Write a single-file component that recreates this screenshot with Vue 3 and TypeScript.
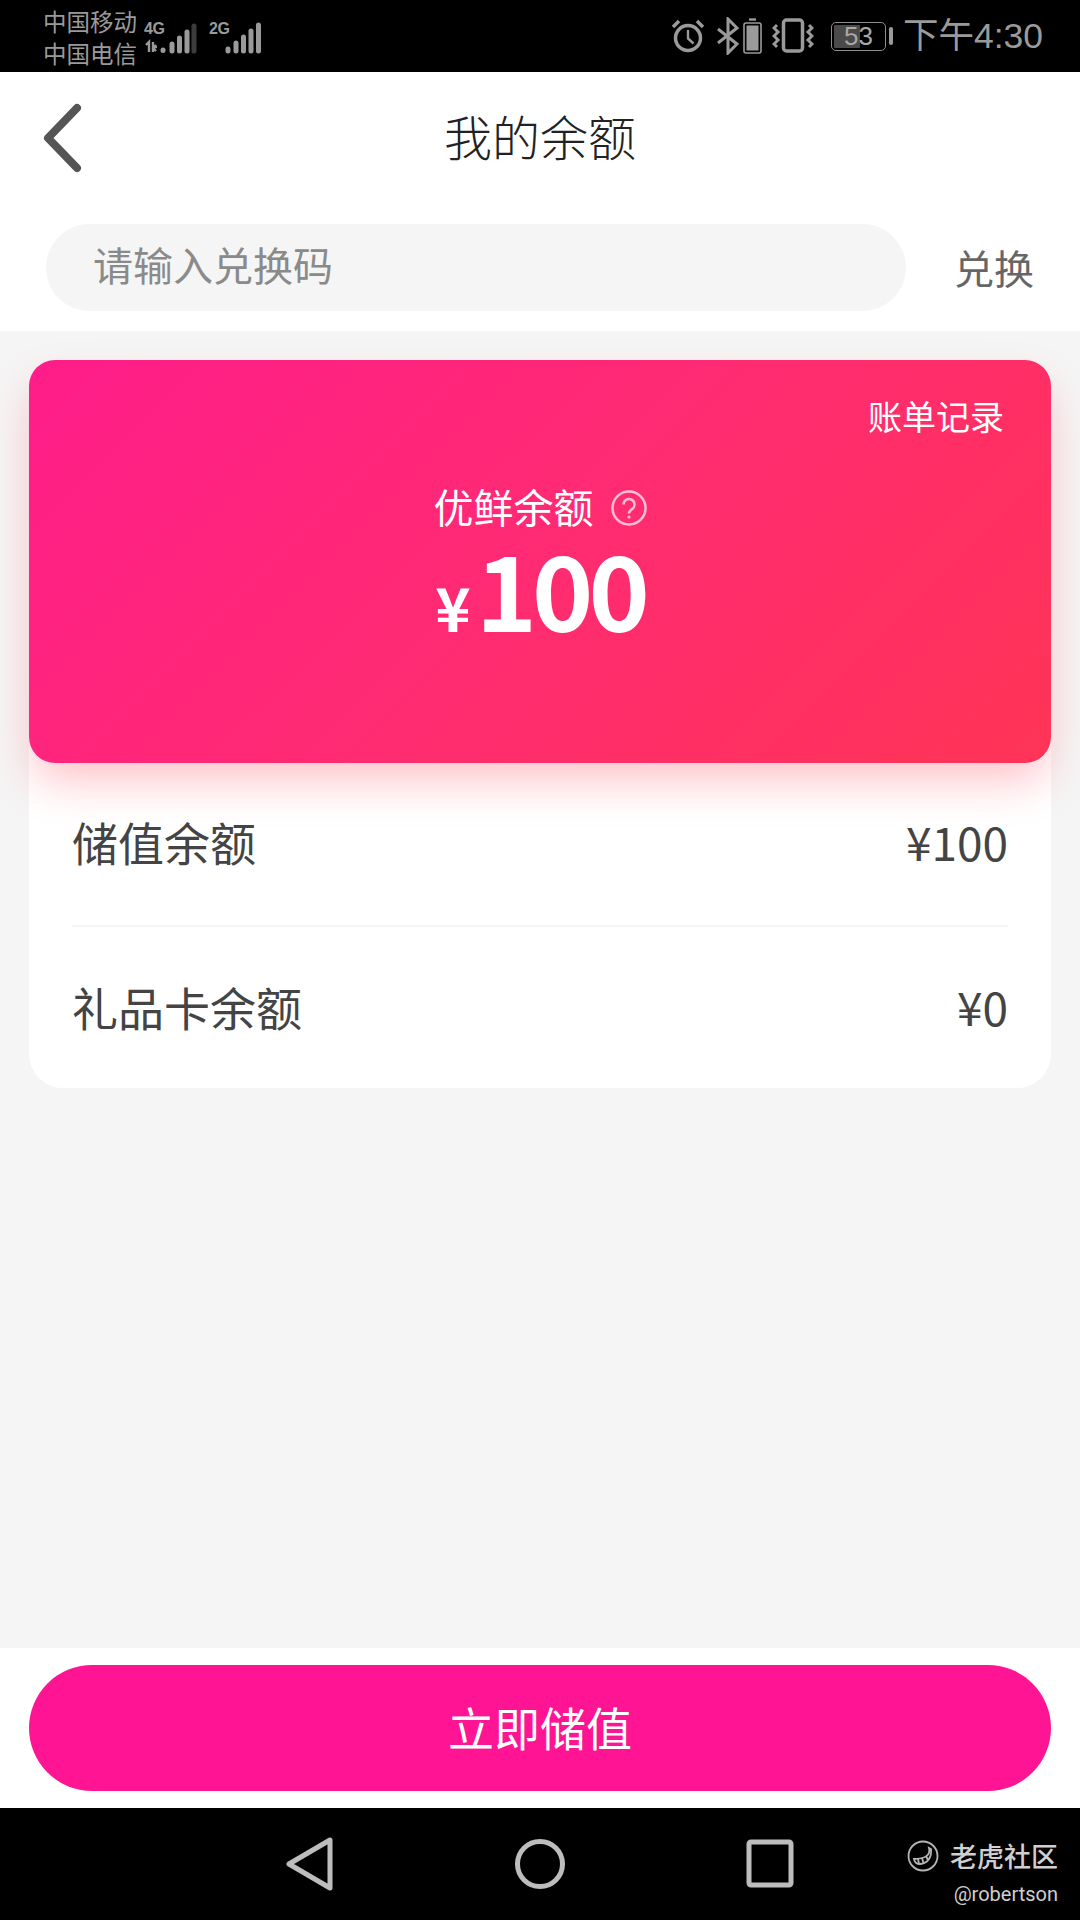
<script setup lang="ts">
import { ref } from 'vue';

const code = ref<string>('');
const balances = [
  { label: '储值余额', value: '¥100' },
  { label: '礼品卡余额', value: '¥0' },
];
</script>

<template>
  <div class="page">
    <div class="status">
      <div class="carriers">
        <span>中国移动</span>
        <span>中国电信</span>
      </div>
      <svg class="signal-a" width="56" height="36" viewBox="0 0 56 36">
        <text x="0" y="15" class="net">4G</text>
        <path d="M2 26l3-3v10M9 23v10M9 28l4 0M12 26l-3 3l3 3" stroke="#9a9a9a" stroke-width="2.4" fill="none" />
        <g stroke-linecap="round" stroke-width="5" fill="none" stroke="#9a9a9a">
          <path d="M19 31.500v-.5M28 32v-7M35.500 32v-13M43 32v-19" />
          <path d="M50 32v-25" stroke="#3c3c3c" />
        </g>
      </svg>
      <svg class="signal-b" width="56" height="36" viewBox="0 0 56 36">
        <text x="0" y="15" class="net">2G</text>
        <g stroke-linecap="round" stroke-width="5" fill="none" stroke="#9a9a9a">
          <path d="M19 32v-2M27 32v-8M34.500 32v-14M42 32v-20M49.500 32v-26" />
        </g>
      </svg>
      <div class="status-right">
        <svg width="36" height="36" viewBox="0 0 36 36" fill="none" stroke="#9a9a9a">
          <circle cx="18" cy="20" r="12.500" stroke-width="3.500" />
          <path d="M18 12v8.500l5.500 5" stroke-width="2.400" />
          <path d="M3 9l6-6M33 9l-6-6" stroke-width="3.500" />
        </svg>
        <svg class="bt" width="46" height="38" viewBox="0 0 46 38" fill="none" stroke="#9a9a9a">
          <path d="M1 12l19 15l-9 9v-34l9 9l-19 15" stroke-width="3" />
          <rect x="27" y="6" width="17" height="30" rx="2" stroke-width="1.600" />
          <rect x="29.500" y="8.500" width="12" height="25" fill="#9a9a9a" stroke="none" />
          <path d="M32 2.500h7" stroke-width="2.400" />
        </svg>
        <svg class="vibrate" width="42" height="36" viewBox="0 0 42 36" fill="none" stroke="#9a9a9a">
          <rect x="11.500" y="2" width="19" height="31" rx="3" stroke-width="3.500" />
          <path d="M5 7l-3 3l4 4l-4 4l4 4l-4 4l3 3M37 7l3 3l-4 4l4 4l-4 4l4 4l-3 3" stroke-width="3" />
        </svg>
        <div class="battery">
          <div class="battery-box">
            <div class="battery-fill"></div>
            <span class="battery-num">53</span>
          </div>
          <div class="battery-nub"></div>
        </div>
        <span class="time">下午4:30</span>
      </div>
    </div>

    <div class="header">
      <svg class="back" width="44" height="72" viewBox="0 0 44 72" fill="none">
        <path d="M36 6L7 36l29 30" stroke="#555" stroke-width="8" stroke-linecap="round" stroke-linejoin="round" />
      </svg>
      <h1 class="title">我的余额</h1>
    </div>

    <div class="redeem">
      <input v-model="code" class="redeem-input" type="text" placeholder="请输入兑换码" />
      <span class="redeem-btn">兑换</span>
    </div>

    <div class="main">
      <div class="card">
        <div class="card-link">账单记录</div>
        <div class="card-center">
          <div class="card-label">
            <span class="card-label-text">优鲜余额</span>
            <svg width="36" height="36" viewBox="0 0 36 36" fill="none">
              <circle cx="18" cy="18" r="16.500" stroke="#fff" stroke-opacity="0.7" stroke-width="2.500" />
              <path d="M12.500 14.500a5.500 5.500 0 1 1 8.500 4.600c-2 1.300-3 2.400-3 4.400" stroke="#fff" stroke-opacity="0.7" stroke-width="2.500" />
              <circle cx="18" cy="27" r="1.600" fill="#fff" fill-opacity="0.7" />
            </svg>
          </div>
          <div class="card-amount">
            <span class="card-yen">¥</span>
            <span class="card-num">100</span>
          </div>
        </div>
      </div>
      <div class="panel">
        <div v-for="item in balances" :key="item.label" class="row">
          <span>{{ item.label }}</span>
          <span>{{ item.value }}</span>
        </div>
      </div>
    </div>

    <div class="footer">
      <button class="charge" type="button">立即储值</button>
    </div>

    <div class="nav">
      <svg width="50" height="54" viewBox="0 0 50 54" fill="none" stroke="#bdbdbd" stroke-width="5" stroke-linejoin="round">
        <path d="M45 3v48L4 27z" />
      </svg>
      <svg width="50" height="54" viewBox="0 0 50 54" fill="none" stroke="#bdbdbd" stroke-width="5">
        <circle cx="25" cy="27" r="22.500" />
      </svg>
      <svg width="50" height="54" viewBox="0 0 50 54" fill="none" stroke="#bdbdbd" stroke-width="5" stroke-linejoin="round">
        <rect x="4" y="5" width="42" height="43" rx="2" />
      </svg>
      <div class="mark">
        <div class="mark-top">
          <svg width="32" height="32" viewBox="0 0 32 32" fill="none" stroke="#b5b5b5">
            <circle cx="16" cy="16" r="14.500" stroke-width="1.800" />
            <path d="M22 8c2 7-4 11-15 11c1 4 3 5 5 5c8 0 13-6 12-15z" stroke-width="1.800" />
            <path d="M11 19l1 5M15 18l1.500 5M19 16l2 4" stroke-width="1.800" />
          </svg>
          <span>老虎社区</span>
        </div>
        <div class="mark-user">@robertson</div>
      </div>
    </div>
  </div>
</template>

<style>
html,
body {
  margin: 0;
  padding: 0;
}
</style>

<style scoped>
.page {
  width: 1080px;
  height: 1920px;
  display: flex;
  flex-direction: column;
  position: relative;
  overflow: hidden;
  background: #fff;
  font-family: "Noto Sans CJK SC", "Noto Sans", sans-serif;
  font-weight: 400;
}
.status {
  height: 72px;
  flex: none;
  background: #000;
  color: #9a9a9a;
  display: flex;
  align-items: center;
  padding: 0 37px 0 43px;
  box-sizing: border-box;
}
.carriers {
  display: flex;
  flex-direction: column;
  font-size: 23.500px;
  line-height: 32px;
  width: 101px;
  padding-top: 2px;
}
.signal-a {
  margin-top: 2px;
}
.signal-b {
  margin-left: 9px;
  margin-top: 2px;
}
.net {
  font-family: "Liberation Sans", sans-serif;
  font-size: 16px;
  font-weight: 700;
  fill: #9a9a9a;
  letter-spacing: -0.500px;
}
.status-right {
  margin-left: auto;
  display: flex;
  align-items: center;
}
.bt {
  margin-left: 11px;
}
.vibrate {
  margin-left: 9px;
}
.battery {
  margin-left: 17px;
  display: flex;
  align-items: center;
  gap: 3px;
}
.battery-box {
  width: 55px;
  height: 29px;
  border: 1.500px solid #8e8e8e;
  border-radius: 5px;
  box-sizing: border-box;
  padding: 2px;
  display: flex;
  position: relative;
}
.battery-fill {
  width: 53%;
  background: #4a4a4a;
  border-radius: 1px;
}
.battery-num {
  position: absolute;
  inset: 0;
  text-align: center;
  line-height: 26px;
  font-size: 26px;
  font-family: "Liberation Sans", sans-serif;
  color: #a8a8a8;
}
.battery-nub {
  width: 4px;
  height: 18px;
  background: #9a9a9a;
  border-radius: 2px;
}
.time {
  margin-left: 10px;
  font-size: 35.500px;
  font-family: "Liberation Sans", "Noto Sans CJK SC", sans-serif;
  line-height: 40px;
  color: #9a9a9a;
}
.header {
  height: 138px;
  flex: none;
  display: flex;
  align-items: center;
  justify-content: center;
  position: relative;
  padding-bottom: 12px;
  box-sizing: border-box;
}
.back {
  position: absolute;
  left: 41px;
  top: 30px;
}
.title {
  margin: 0;
  font-size: 48px;
  font-weight: 300;
  color: #222;
  line-height: 60px;
}
.redeem {
  margin-top: 14px;
  height: 107px;
  flex: none;
  display: flex;
  align-items: flex-start;
  padding: 0 46px 0 46px;
  box-sizing: border-box;
}
.redeem-input {
  width: 860px;
  height: 87px;
  flex: none;
  box-sizing: border-box;
  border: none;
  outline: none;
  border-radius: 44px;
  background: #f5f5f5;
  padding: 0 0 7px 47px;
  font: inherit;
  font-size: 40px;
  color: #333;
}
.redeem-input::placeholder {
  color: #8a8a8a;
  opacity: 1;
}
.redeem-btn {
  flex: none;
  margin-left: 48px;
  font-size: 40px;
  line-height: 86px;
  color: #666;
  white-space: nowrap;
}
.main {
  flex: 1;
  background: #f5f5f5;
  padding: 29px 29px 0;
}
.card {
  position: relative;
  z-index: 1;
  height: 403px;
  border-radius: 26px;
  background: linear-gradient(135deg, #ff1d8a 0%, #ff2b72 50%, #ff3456 100%);
  box-shadow: 0 22px 44px -4px rgba(255, 60, 80, 0.3);
  color: #fff;
  padding: 34px 47px 0;
  box-sizing: border-box;
}
.card-link {
  text-align: right;
  font-size: 34px;
  line-height: 44px;
}
.card-center {
  display: flex;
  flex-direction: column;
  align-items: center;
  margin-top: 39px;
}
.card-label {
  display: flex;
  align-items: center;
  gap: 17px;
  font-size: 40px;
  line-height: 58px;
}
.card-label-text {
  padding-bottom: 3px;
}
.card-amount {
  display: flex;
  align-items: baseline;
  gap: 5px;
  margin-top: -1px;
  line-height: 100px;
  font-weight: 700;
}
.card-yen {
  font-size: 60px;
}
.card-num {
  font-size: 104px;
  letter-spacing: -5px;
}
.panel {
  background: #fff;
  margin-top: -30px;
  padding: 30px 43px 0;
  border-radius: 0 0 34px 34px;
  height: 355px;
  box-sizing: border-box;
}
.row {
  height: 164px;
  display: flex;
  align-items: center;
  justify-content: space-between;
  font-size: 46px;
  color: #444;
  padding-bottom: 7px;
  box-sizing: border-box;
}
.row:first-child {
  border-bottom: 2px solid #f5f5f5;
}
.footer {
  flex: none;
  height: 160px;
  background: #fff;
  padding: 17px 29px;
  box-sizing: border-box;
}
.charge {
  width: 100%;
  height: 126px;
  border: none;
  border-radius: 63px;
  background: #ff1493;
  color: #fff;
  font: inherit;
  font-size: 46px;
  padding: 0 0 5px;
}
.nav {
  flex: none;
  height: 112px;
  background: #000;
  display: flex;
  align-items: center;
  position: relative;
  padding-left: 285px;
  gap: 180px;
  box-sizing: border-box;
}
.mark {
  position: absolute;
  right: 22px;
  top: 30px;
  color: #cfcfcf;
  display: flex;
  flex-direction: column;
  align-items: flex-end;
}
.mark-top {
  display: flex;
  align-items: center;
  gap: 11px;
  font-size: 27px;
  font-weight: 500;
  line-height: 36px;
}
.mark-user {
  margin-top: 6px;
  font-size: 20px;
  line-height: 28px;
  font-family: Roboto, sans-serif;
  font-weight: 400;
}
</style>
